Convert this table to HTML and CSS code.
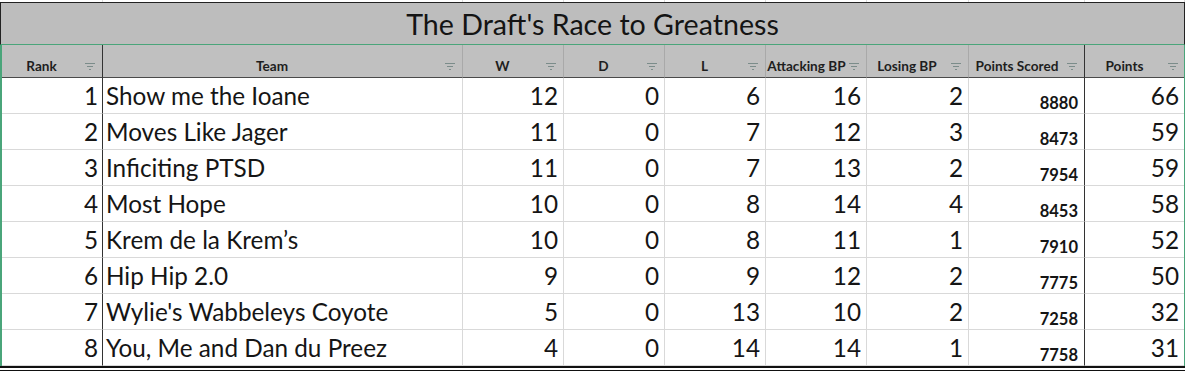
FILE: index.html
```html
<!DOCTYPE html>
<html>
<head>
<meta charset="utf-8">
<link rel="stylesheet" href="styles.css">
</head>
<body>
<div class="sheet">
  <div class="stub">
    <span></span><span></span><span></span><span></span><span></span><span></span><span></span><span></span><span></span>
  </div>
  <div class="title">The Draft's Race to Greatness</div>
  <div class="table">
    <div class="hd c-rank"><span class="lbl">Rank</span><svg class="flt" viewBox="0 0 10 7"><rect x="0" y="0" width="10" height="1"/><rect x="2" y="3" width="6" height="1"/><rect x="4" y="6" width="2" height="1"/></svg></div>
    <div class="hd c-team"><span class="lbl">Team</span><svg class="flt" viewBox="0 0 10 7"><rect x="0" y="0" width="10" height="1"/><rect x="2" y="3" width="6" height="1"/><rect x="4" y="6" width="2" height="1"/></svg></div>
    <div class="hd"><span class="lbl">W</span><svg class="flt" viewBox="0 0 10 7"><rect x="0" y="0" width="10" height="1"/><rect x="2" y="3" width="6" height="1"/><rect x="4" y="6" width="2" height="1"/></svg></div>
    <div class="hd"><span class="lbl">D</span><svg class="flt" viewBox="0 0 10 7"><rect x="0" y="0" width="10" height="1"/><rect x="2" y="3" width="6" height="1"/><rect x="4" y="6" width="2" height="1"/></svg></div>
    <div class="hd"><span class="lbl">L</span><svg class="flt" viewBox="0 0 10 7"><rect x="0" y="0" width="10" height="1"/><rect x="2" y="3" width="6" height="1"/><rect x="4" y="6" width="2" height="1"/></svg></div>
    <div class="hd"><span class="lbl wide">Attacking BP</span><svg class="flt" viewBox="0 0 10 7"><rect x="0" y="0" width="10" height="1"/><rect x="2" y="3" width="6" height="1"/><rect x="4" y="6" width="2" height="1"/></svg></div>
    <div class="hd"><span class="lbl">Losing BP</span><svg class="flt" viewBox="0 0 10 7"><rect x="0" y="0" width="10" height="1"/><rect x="2" y="3" width="6" height="1"/><rect x="4" y="6" width="2" height="1"/></svg></div>
    <div class="hd c-ps"><span class="lbl wide">Points Scored</span><svg class="flt" viewBox="0 0 10 7"><rect x="0" y="0" width="10" height="1"/><rect x="2" y="3" width="6" height="1"/><rect x="4" y="6" width="2" height="1"/></svg></div>
    <div class="hd c-pts"><span class="lbl">Points</span><svg class="flt" viewBox="0 0 10 7"><rect x="0" y="0" width="10" height="1"/><rect x="2" y="3" width="6" height="1"/><rect x="4" y="6" width="2" height="1"/></svg></div>

    <div class="td c-rank num">1</div><div class="td c-team">Show me the Ioane</div><div class="td num">12</div><div class="td num">0</div><div class="td num">6</div><div class="td num">16</div><div class="td num">2</div><div class="td c-ps ps">8880</div><div class="td c-pts num">66</div>
    <div class="td c-rank num">2</div><div class="td c-team">Moves Like Jager</div><div class="td num">11</div><div class="td num">0</div><div class="td num">7</div><div class="td num">12</div><div class="td num">3</div><div class="td c-ps ps">8473</div><div class="td c-pts num">59</div>
    <div class="td c-rank num">3</div><div class="td c-team">Inficiting PTSD</div><div class="td num">11</div><div class="td num">0</div><div class="td num">7</div><div class="td num">13</div><div class="td num">2</div><div class="td c-ps ps">7954</div><div class="td c-pts num">59</div>
    <div class="td c-rank num">4</div><div class="td c-team">Most Hope</div><div class="td num">10</div><div class="td num">0</div><div class="td num">8</div><div class="td num">14</div><div class="td num">4</div><div class="td c-ps ps">8453</div><div class="td c-pts num">58</div>
    <div class="td c-rank num">5</div><div class="td c-team">Krem de la Krem’s</div><div class="td num">10</div><div class="td num">0</div><div class="td num">8</div><div class="td num">11</div><div class="td num">1</div><div class="td c-ps ps">7910</div><div class="td c-pts num">52</div>
    <div class="td c-rank num">6</div><div class="td c-team">Hip Hip 2.0</div><div class="td num">9</div><div class="td num">0</div><div class="td num">9</div><div class="td num">12</div><div class="td num">2</div><div class="td c-ps ps">7775</div><div class="td c-pts num">50</div>
    <div class="td c-rank num">7</div><div class="td c-team">Wylie's Wabbeleys Coyote</div><div class="td num">5</div><div class="td num">0</div><div class="td num">13</div><div class="td num">10</div><div class="td num">2</div><div class="td c-ps ps">7258</div><div class="td c-pts num">32</div>
    <div class="td c-rank num">8</div><div class="td c-team">You, Me and Dan du Preez</div><div class="td num">4</div><div class="td num">0</div><div class="td num">14</div><div class="td num">14</div><div class="td num">1</div><div class="td c-ps ps">7758</div><div class="td c-pts num">31</div>
  </div>
  <div class="foot"></div>
</div>
</body>
</html>
```
FILE: styles.css
```css
html, body {
  margin: 0;
  padding: 0;
  background: #ffffff;
}
body {
  font-family: Lato, "Open Sans", sans-serif;
  color: #1a1a1a;
}
.sheet {
  width: 1185px;
}
.stub {
  display: grid;
  grid-template-columns: 103px 360px 101px 101px 101px 101px 102px 116px 100px;
  height: 2px;
}
.stub span {
  border-right: 1px solid #dcdcdc;
}
.title {
  background: #bdbdbd;
  border-top: 1px solid #222;
  border-left: 1px solid #222;
  border-right: 1px solid #222;
  border-bottom: 1px solid #4aa57a;
  display: flex;
  align-items: center;
  justify-content: center;
  font-size: 28.6px;
  color: #141414;
  padding-top: 1px;
  box-sizing: border-box;
  height: 43px;
}
.table {
  display: grid;
  grid-template-columns: 101px 360px 101px 101px 101px 101px 102px 116px 99px;
  grid-auto-rows: 36px;
  grid-template-rows: 33px;
  border-left: 2px solid #4aa57a;
  border-right: 1px solid #4aa57a;
}
.hd {
  background: #c0c0c0;
  border-right: 1px solid #a9a9a9;
  border-bottom: 1px solid #4a4a4a;
  display: flex;
  align-items: flex-end;
  padding-bottom: 3px;
  box-sizing: border-box;
  font-weight: 700;
  font-size: 13.6px;
  color: #1e1e1e;
  min-width: 0;
}
.hd .lbl {
  flex: 1;
  text-align: center;
  line-height: 16px;
  white-space: nowrap;
}
.flt {
  width: 10px;
  height: 7px;
  fill: #7b8c8a;
  margin: 0 7px 4px 4px;
  flex: none;
}
.hd.c-rank, .hd.c-ps {
  border-right-color: #333;
}
.hd.c-pts {
  border-right: none;
}
.hd.c-pts .flt { margin-right: 6px; }
.hd .wide + .flt { margin-left: 2px; }
.td {
  border-right: 1px solid #d9d9d9;
  border-bottom: 1px solid #d9d9d9;
  display: flex;
  align-items: flex-end;
  font-size: 24.3px;
  line-height: 28px;
  padding: 0 5px 3px 4px;
  box-sizing: border-box;
  white-space: nowrap;
  color: #151515;
}
.td.num {
  justify-content: flex-end;
}
.td.c-rank {
  border-right-color: #333;
  padding-right: 4px;
}
.td.c-team {
  padding-left: 3px;
}
.td.ps {
  justify-content: flex-end;
  font-weight: 700;
  font-size: 16.5px;
  line-height: 19px;
  padding-bottom: 0;
  padding-right: 6px;
  border-right-color: #333;
}
.td.c-pts {
  border-right: none;
  padding-right: 5px;
}
.foot {
  height: 5px;
  box-sizing: border-box;
  border-top: 2px solid #111;
  border-bottom: 1px solid #111;
}
```
